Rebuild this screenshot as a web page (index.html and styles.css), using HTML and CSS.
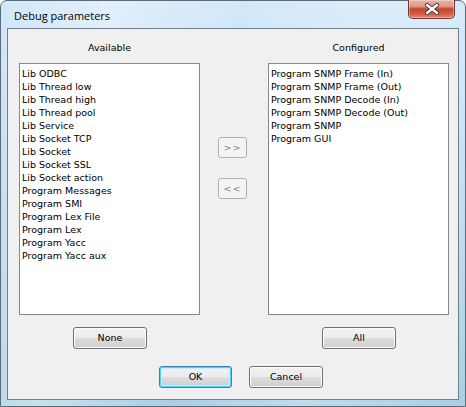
FILE: index.html
```html
<!DOCTYPE html>
<html>
<head>
<meta charset="utf-8">
<link rel="stylesheet" href="styles.css">
</head>
<body>
<div class="window">
  <div class="titlebar">
    <span class="title">Debug parameters</span>
    <div class="close">
      <svg width="18" height="12" viewBox="0 0 18 12">
        <path d="M4 2 L14 10 M14 2 L4 10" stroke="#3a3a3a" stroke-width="4.2" stroke-linecap="round"/>
        <path d="M4 2 L14 10 M14 2 L4 10" stroke="#ffffff" stroke-width="2.4" stroke-linecap="round"/>
      </svg>
    </div>
  </div>
  <div class="client">
    <div class="grid">
      <div class="label">Available</div>
      <div></div>
      <div class="label">Configured</div>

      <div class="list">
        <div>Lib ODBC</div>
        <div>Lib Thread low</div>
        <div>Lib Thread high</div>
        <div>Lib Thread pool</div>
        <div>Lib Service</div>
        <div>Lib Socket TCP</div>
        <div>Lib Socket</div>
        <div>Lib Socket SSL</div>
        <div>Lib Socket action</div>
        <div>Program Messages</div>
        <div>Program SMI</div>
        <div>Program Lex File</div>
        <div>Program Lex</div>
        <div>Program Yacc</div>
        <div>Program Yacc aux</div>
      </div>
      <div class="mid">
        <button class="btn disabled mv first">&gt;&gt;</button>
        <button class="btn disabled mv">&lt;&lt;</button>
      </div>
      <div class="list">
        <div>Program SNMP Frame (In)</div>
        <div>Program SNMP Frame (Out)</div>
        <div>Program SNMP Decode (In)</div>
        <div>Program SNMP Decode (Out)</div>
        <div>Program SNMP</div>
        <div>Program GUI</div>
      </div>

      <div class="cell"><button class="btn side">None</button></div>
      <div></div>
      <div class="cell"><button class="btn side">All</button></div>
    </div>
    <div class="footer">
      <button class="btn default">OK</button>
      <button class="btn">Cancel</button>
    </div>
  </div>
</div>
</body>
</html>
```

FILE: styles.css
```css
html, body {
  margin: 0;
  padding: 0;
  background: #ffffff;
}

.window {
  width: 466px;
  height: 407px;
  box-sizing: border-box;
  border: 1px solid #5b6b78;
  border-radius: 7px 7px 0 0;
  background:
    linear-gradient(100deg, rgba(255,255,255,0.0) 0%, rgba(255,255,255,0.35) 20%, rgba(255,255,255,0) 45%, rgba(255,255,255,0.25) 70%, rgba(255,255,255,0) 100%),
    linear-gradient(180deg, #d2e8f9 0%, #c6def3 40%, #a9d0e4 100%);
  padding: 0 6px 6px 6px;
  display: flex;
  flex-direction: column;
  position: relative;
  font-family: "DejaVu Sans", Verdana, sans-serif;
}

.titlebar {
  height: 27px;
  position: relative;
}

.title {
  position: absolute;
  left: 7px;
  top: 7px;
  font-family: "Open Sans", "Noto Sans", sans-serif;
  font-size: 11px;
  color: #000000;
  line-height: 16px;
}

.close {
  position: absolute;
  right: 4px;
  top: -1px;
  width: 47px;
  height: 19px;
  box-sizing: border-box;
  border: 1px solid #6e3a33;
  border-top: none;
  border-radius: 0 0 5px 5px;
  background: linear-gradient(180deg, #eab1a6 0%, #e29a8c 35%, #c8432c 50%, #d2533a 70%, #e0866e 100%);
  box-shadow: inset 0 0 0 1px rgba(255,255,255,0.35);
  display: flex;
  align-items: center;
  justify-content: center;
}

.client {
  flex: 1;
  background: #f0f0f0;
  border: 1px solid #6f7f8c;
  display: flex;
  flex-direction: column;
}

.grid {
  display: grid;
  grid-template-columns: 181px 1fr 181px;
  grid-template-rows: auto 252px auto;
  padding: 12px 9px 0 11px;
}

.label {
  font-size: 9.5px;
  line-height: 13px;
  text-align: center;
  color: #000;
  margin-bottom: 9px;
}

.list {
  background: #ffffff;
  border: 1px solid #828790;
  box-sizing: border-box;
  padding: 3px 2px;
  font-size: 9.5px;
  line-height: 13px;
  color: #000;
}

.mid {
  display: flex;
  flex-direction: column;
  align-items: flex-start;
  padding-left: 18px;
}

.btn {
  font-family: "DejaVu Sans", Verdana, sans-serif;
  font-size: 9.5px;
  color: #000;
  height: 22px;
  width: 74px;
  box-sizing: border-box;
  border: 1px solid #707070;
  border-radius: 3px;
  background: linear-gradient(180deg, #f2f2f2 0%, #ebebeb 50%, #dddddd 51%, #cfcfcf 100%);
  box-shadow: inset 0 0 0 1px #fcfcfc;
  padding: 0;
  line-height: 18px;
}

.btn.mv {
  width: 29px;
  height: 21px;
  letter-spacing: 1px;
}

.btn.mv.first {
  margin-top: 74px;
  margin-bottom: 20px;
}

.btn.disabled {
  border-color: #adb2b5;
  background: #f4f4f4;
  box-shadow: none;
  color: #838383;
}

.cell {
  display: flex;
  justify-content: center;
  padding-top: 12px;
}

.cell .btn {
  margin-left: 1px;
}

.footer {
  display: flex;
  gap: 17px;
  padding-left: 151px;
  padding-top: 17px;
}

.btn.default {
  width: 73px;
  border-color: #3c7fb1;
  box-shadow: inset 0 0 0 1px #48d8fb, inset 0 0 0 2px #c8ecfa;
}
```
